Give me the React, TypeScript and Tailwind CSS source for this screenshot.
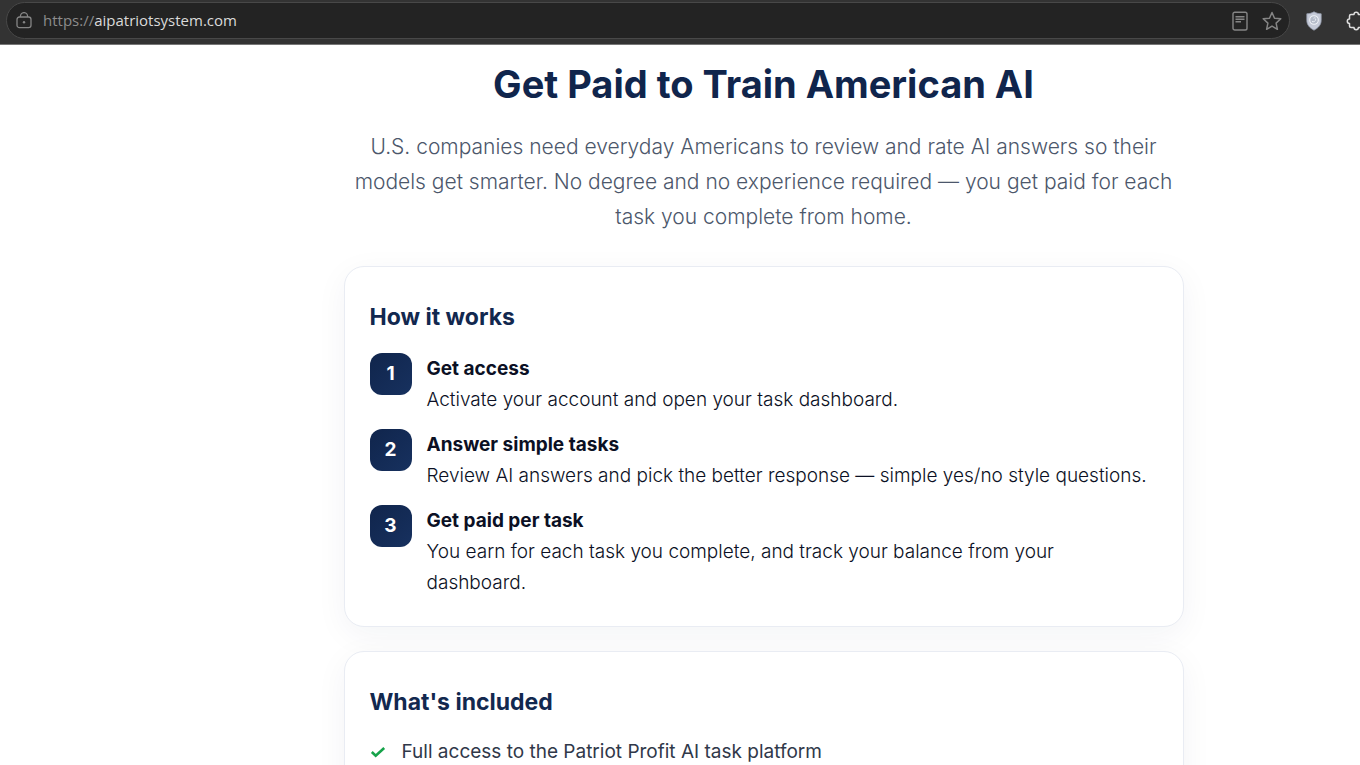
import React from "react";

const steps = [
  { title: "Get access", text: "Activate your account and open your task dashboard." },
  {
    title: "Answer simple tasks",
    text: "Review AI answers and pick the better response — simple yes/no style questions.",
  },
  {
    title: "Get paid per task",
    text: "You earn for each task you complete, and track your balance from your dashboard.",
  },
];

const included = ["Full access to the Patriot Profit AI task platform"];

function LockIcon() {
  return (
    <svg className="h-[17px] w-4 shrink-0" viewBox="0 0 16 17" fill="none" stroke="#858585" strokeWidth="1.3" aria-hidden="true">
      <rect x="1" y="5" width="14" height="10.6" rx="2.4" />
      <path d="M4.4 5V4.2a3.6 3.6 0 0 1 7.2 0V5" />
      <circle cx="8" cy="10.3" r="1.2" fill="#858585" stroke="none" />
    </svg>
  );
}

function ReaderIcon() {
  return (
    <svg className="h-5 w-4" viewBox="0 0 16 20" fill="none" stroke="#858585" strokeWidth="1.4" aria-hidden="true">
      <rect x="1" y="1.2" width="14" height="17.8" rx="1.8" />
      <path d="M3.5 5.7h9M3.5 8.2h9M3.5 10.7h5.5" />
    </svg>
  );
}

function StarIcon() {
  return (
    <svg className="size-5" viewBox="0 0 20 20" fill="none" stroke="#858585" strokeWidth="1.5" strokeLinejoin="round" aria-hidden="true">
      <path d="m10 1.5 2.5 5.7 6.3.6-4.7 4.3 1.3 6.2-5.4-3.2-5.4 3.2 1.3-6.2-4.7-4.3 6.3-.6Z" />
    </svg>
  );
}

function ShieldIcon() {
  return (
    <svg className="h-5 w-4" viewBox="0 0 16 20" aria-hidden="true">
      <path d="M8 .8c2.2 1.3 4.5 1.9 7.2 2v6.4c0 4.5-2.7 7.7-7.2 10-4.5-2.3-7.2-5.5-7.2-10V2.8C3.5 2.7 5.8 2.1 8 .8Z" fill="#c5cad8" stroke="#9299aa" strokeWidth=".8" />
      <circle cx="8" cy="9" r="4.3" fill="#b4bbc9" stroke="#f0f3f8" strokeWidth="1.1" />
      <path d="M6 10.5c1.5.8 3.7-.2 3.8-2.5M7.5 7.3c.8-.6 1.6-.6 2.3 0" fill="none" stroke="#edf1f7" strokeWidth="1" />
    </svg>
  );
}

function ExtensionsIcon() {
  return (
    <svg className="size-5" viewBox="0 0 20 20" fill="none" stroke="#dedede" strokeWidth="1.5" strokeLinejoin="round" aria-hidden="true">
      <path d="M5 3.5h3a2.2 2.2 0 0 1 4.400 0H15A1.500 1.500 0 0 1 16.500 5v3a2.200 2.200 0 0 1 0 4.400V15a1.500 1.500 0 0 1-1.500 1.500h-2.600a2.200 2.200 0 0 1-4.400 0H5A1.500 1.500 0 0 1 3.500 15v-2.600a2.200 2.200 0 0 1 0-4.400V5A1.500 1.500 0 0 1 5 3.500Z" />
    </svg>
  );
}

function CheckIcon() {
  return (
    <svg className="h-3 w-4 shrink-0" viewBox="0 0 16 12" fill="none" stroke="#16a34a" strokeWidth="2.6" aria-hidden="true">
      <path d="m1.8 6 3.9 3.7L14.2 2" />
    </svg>
  );
}

function Card({ title, children }: { title: string; children: React.ReactNode }) {
  return (
    <section className="rounded-[20px] border border-[#e9ecf3] bg-white px-[25px] pt-8 pb-7 shadow-[0_8px_32px_rgba(15,35,75,0.05)]">
      <h2 className="text-[23px] leading-9 font-bold text-[#12284f]">{title}</h2>
      {children}
    </section>
  );
}

export default function App() {
  return (
    <div className="h-screen overflow-hidden bg-white font-['Inter',sans-serif]">
      <header className="flex h-[45px] items-start overflow-hidden border-b border-[#777] bg-[#333] pt-0.5 pl-1.5">
        <div className="flex h-[37px] flex-1 items-center rounded-full border border-[#484848] bg-[#232323] pr-[7px] pl-[9px] font-['Open_Sans',sans-serif] text-[15px]">
          <LockIcon />
          <label htmlFor="address" className="pl-[11px] text-[#8c8c8c]">
            https://
          </label>
          <input
            id="address"
            className="min-w-0 flex-1 bg-transparent text-[#dadada] outline-none"
            defaultValue="aipatriotsystem.com"
          />
          <div className="flex items-center gap-3.5">
            <button type="button" aria-label="Reader view"><ReaderIcon /></button>
            <button type="button" aria-label="Bookmark this page"><StarIcon /></button>
          </div>
        </div>
        <div className="flex h-[37px] w-[70px] shrink-0 items-center gap-6 pl-4">
          <button type="button" aria-label="Privacy protection" className="shrink-0"><ShieldIcon /></button>
          <button type="button" aria-label="Extensions" className="shrink-0"><ExtensionsIcon /></button>
        </div>
      </header>

      <main className="pl-[167px]">
        <div className="mx-auto max-w-[840px]">
          <div className="pt-[15px] text-center">
            <h1 className="text-[38px] leading-12 font-bold text-[#10254c]">Get Paid to Train American AI</h1>
            <p className="mt-[21px] text-[21px] leading-[35px] font-light text-[#4c576b]">
              U.S. companies need everyday Americans to review and rate AI answers so their models get smarter. No degree
              and no experience required — you get paid for each task you complete from home.
            </p>
          </div>

          <div className="mt-8 flex flex-col gap-6">
            <Card title="How it works">
              <ol className="mt-[18px] flex flex-col gap-3.5">
                {steps.map((step, i) => (
                  <li key={step.title} className="flex gap-[15px]">
                    <span className="flex size-[42px] shrink-0 items-center justify-center rounded-xl bg-linear-to-br from-[#10254c] to-[#17315f] text-[19px] font-bold text-white">
                      {i + 1}
                    </span>
                    <div className="text-[19px] leading-[31px] text-[#0b1024]">
                      <h3 className="font-bold">{step.title}</h3>
                      <p className="font-light">{step.text}</p>
                    </div>
                  </li>
                ))}
              </ol>
            </Card>
            <Card title="What's included">
              <ul className="mt-4">
                {included.map((item) => (
                  <li key={item} className="flex items-center gap-4 text-[19px] leading-[31px] text-[#303849]">
                    <CheckIcon />
                    {item}
                  </li>
                ))}
              </ul>
            </Card>
          </div>
        </div>
      </main>
    </div>
  );
}
